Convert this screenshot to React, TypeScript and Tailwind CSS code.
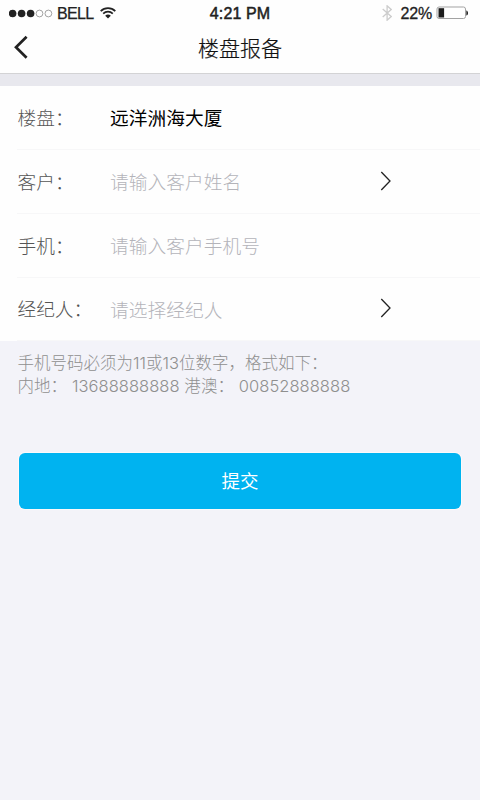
import React from 'react';
import clsx from 'clsx';

interface FormRowProps {
  label: string;
  value: string;
  filled?: boolean;
  arrow?: boolean;
  last?: boolean;
}

const StatusBar: React.FC = () => (
  <div className="grid h-6 grid-cols-3 items-center pt-[2px] font-['Liberation_Sans'] text-[16px] leading-[22px] text-[#222222]">
    <div className="flex items-center pl-[9px]">
      <svg className="mb-px h-[9px] w-[45px] shrink-0" viewBox="0 0 45 9">
        <circle cx="3.6" cy="4.5" r="3.8" fill="#222222" />
        <circle cx="12.6" cy="4.5" r="3.8" fill="#222222" />
        <circle cx="21.6" cy="4.5" r="3.8" fill="#222222" />
        <circle cx="30.5" cy="4.5" r="3.4" fill="none" stroke="#8c8c8c" strokeWidth="0.8" />
        <circle cx="39.4" cy="4.5" r="3.4" fill="none" stroke="#8c8c8c" strokeWidth="0.8" />
      </svg>
      <span className="ml-[3px] w-[38px] tracking-[-0.7px] [-webkit-text-stroke:0.25px_#222222]">BELL</span>
      <svg className="mb-[2px] ml-[5px] h-[12px] w-[16px]" viewBox="0 0 16 12" fill="none" stroke="#222222" strokeWidth="1.7">
        <path d="M0.7 4.1C4.8 0 11.2 0 15.3 4.1" />
        <path d="M3.2 6.7C5.9 4 10.1 4 12.8 6.7" />
        <path d="M5.2 8.7C6.8 7.2 9.2 7.2 10.8 8.7L8 11.6Z" fill="#222222" stroke="none" />
      </svg>
    </div>
    <div className="pt-px text-center">
      <span className="tracking-[0.1px] [-webkit-text-stroke:0.5px_#222222]">4:21 PM</span>
    </div>
    <div className="flex items-center justify-end pr-[11px]">
      <svg className="mb-[2px] h-[16px] w-[10px]" viewBox="0 0 10 16" fill="none" stroke="#cccccc" strokeWidth="1.3">
        <path d="M0.7 4L9.2 11.5L5.1 15.2V0.8L9.2 4.5L0.7 12" />
      </svg>
      <span className="ml-[9px] pt-px tracking-[-0.2px] [-webkit-text-stroke:0.3px_#222222]">22%</span>
      <svg className="mb-[2px] ml-[4px] h-[14px] w-[33px]" viewBox="0 0 33 14">
        <rect x="1" y="1" width="28.5" height="11.5" rx="2" fill="#ffffff" stroke="#a3a3a3" />
        <rect x="2.5" y="2.2" width="5.6" height="9.3" fill="#1c1c1c" />
        <path d="M30.3 4.4C32.6 5 32.6 9 30.3 9.6Z" fill="#222222" />
      </svg>
    </div>
  </div>
);

const FormRow: React.FC<FormRowProps> = ({ label, value, filled = false, arrow = false, last = false }) => (
  <div className={clsx('ml-[17px] flex items-center border-b border-[#f7f7f8] text-[18.7px]', last ? 'h-[63px]' : 'h-[64px]')}>
    <div className="flex w-[93px] pb-px pl-[0.5px] font-light text-[#555555]">
      <span>{label}</span>
      <span>：</span>
    </div>
    <div className={clsx('w-[269px] tracking-[0.08px]', filled ? 'text-black' : 'font-light text-[#b4b4ba]')}>{value}</div>
    {arrow && (
      <svg className="mb-[2px] h-[20px] w-[13px]" viewBox="0 0 13 20" fill="none" stroke="#222222" strokeWidth="1.3">
        <path d="M2.3 1L11 10L2.3 19" />
      </svg>
    )}
  </div>
);

export default function App() {
  return (
    <div lang="zh-CN" className="h-[800px] w-[480px] overflow-hidden bg-[#f3f3f9] font-['Noto_Sans_CJK_SC',sans-serif]">
      <header className="h-[74px] border-b border-[#d3d3d5] bg-[#fefefe]">
        <StatusBar />
        <div className="relative flex h-[45px] items-center justify-center">
          <svg className="absolute top-[11px] left-[13px] h-[24px] w-[16px]" viewBox="0 0 16 24" fill="none" stroke="#222222" strokeWidth="2.7">
            <path d="M13.6 1.8L3 12.3L13.6 22.8" />
          </svg>
          <h1 className="text-[21px] leading-[30px] font-light text-[#111111] [-webkit-text-stroke:0.2px_#111111]">楼盘报备</h1>
        </div>
      </header>
      <div className="h-[12px] bg-[#e8e8ee]" />

      <main>
        <section className="bg-[#fefefe]">
          <FormRow label="楼盘" value="远洋洲海大厦" filled />
          <FormRow label="客户" value="请输入客户姓名" arrow />
          <FormRow label="手机" value="请输入客户手机号" />
          <FormRow label="经纪人" value="请选择经纪人" arrow last />
        </section>

        <div className="pt-[11px] pl-[17.5px] font-['Inter','Noto_Sans_CJK_SC',sans-serif] text-[16.5px] leading-[23px] font-light whitespace-nowrap text-[#8f8f8f]">
          <p>手机号码必须为11或13位数字，格式如下：</p>
          <p className="tracking-[0.06px]">内地： 13688888888 港澳： 00852888888</p>
        </div>

        <button className="mt-[55px] ml-[19px] flex h-[56px] w-[442px] items-center justify-center rounded-[6px] bg-[#00b3f0] text-[18.5px] text-white ring-1 ring-[#fbf9fa]">
          提交
        </button>
      </main>
    </div>
  );
}
